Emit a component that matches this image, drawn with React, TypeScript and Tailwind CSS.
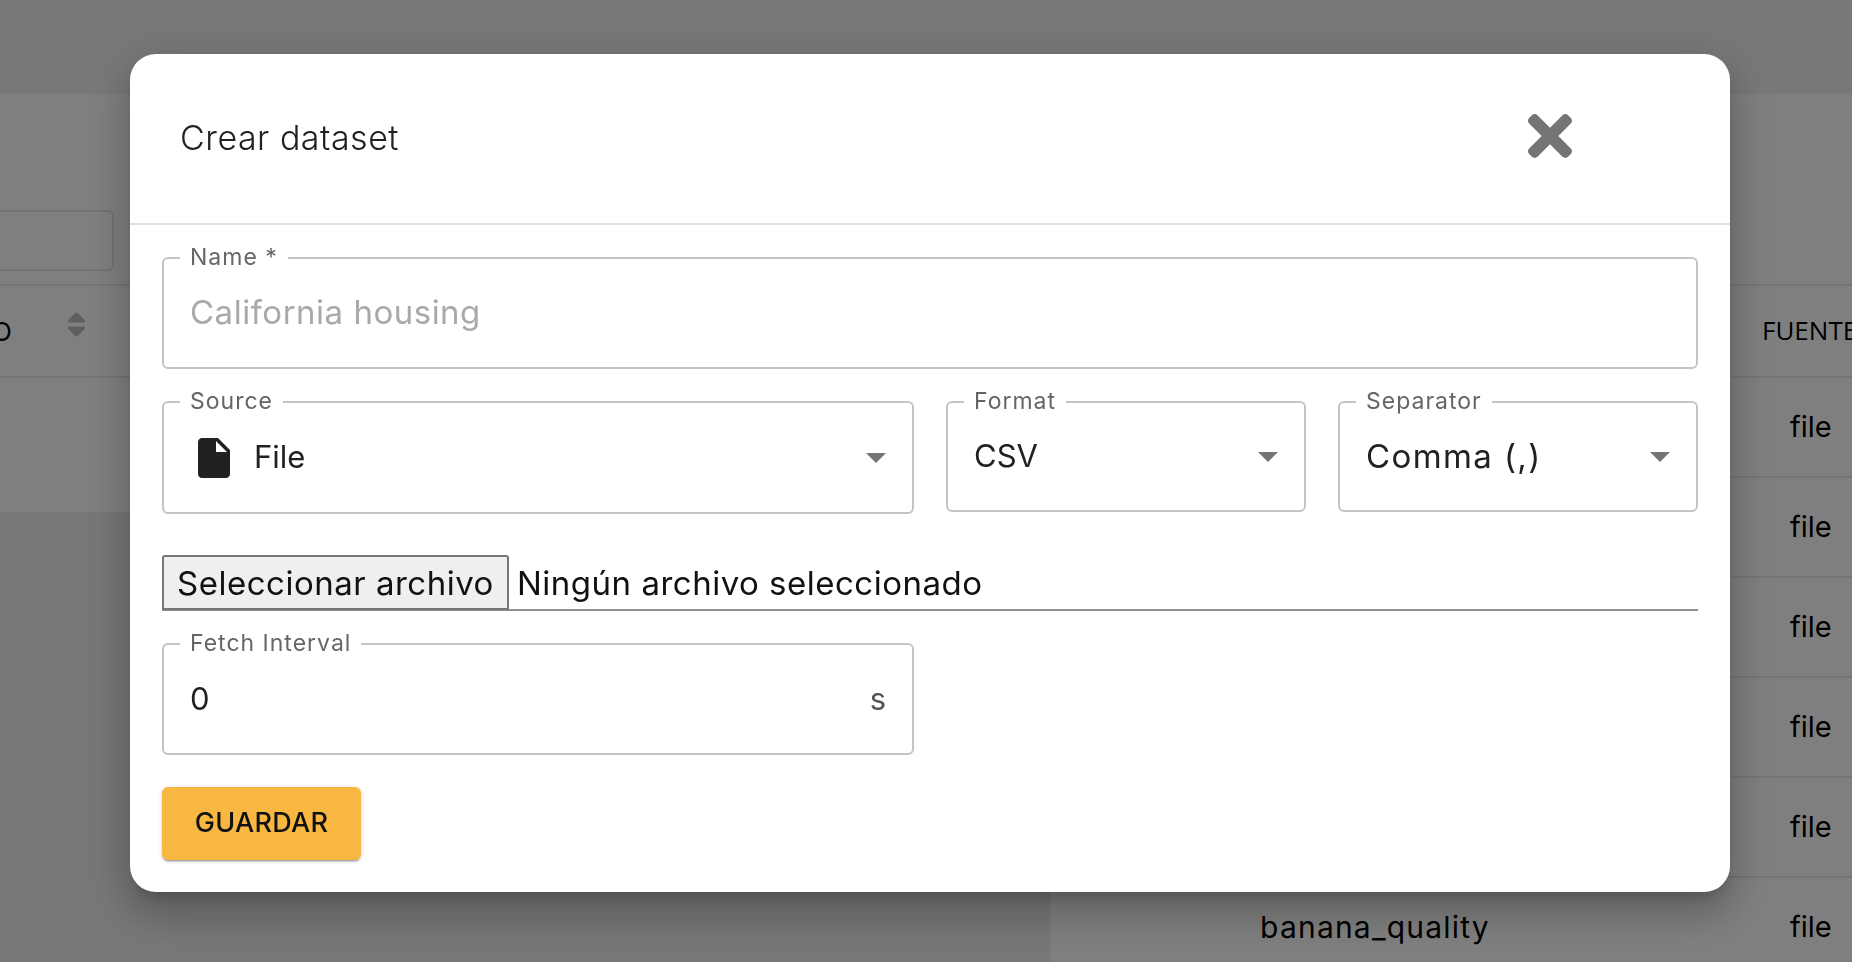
import { FaSort, FaTimes } from 'react-icons/fa';

const rows = ['', '', '', '', '', 'banana_quality'];

function Caret() {
  return (
    <svg width="20" height="10" viewBox="0 0 20 10" className="shrink-0">
      <polygon points="0,0 20,0 10,10" fill="#757575" />
    </svg>
  );
}

function Field({ label, className, children }: { label: string; className: string; children: React.ReactNode }) {
  return (
    <div className={`relative flex items-center rounded-[6px] border-2 border-[#c4c4c4] pl-[26px] ${className}`}>
      <span className="absolute left-4 -top-[14px] bg-white px-2.5 text-[23px] leading-[24px] tracking-[1px] text-[#666666]">{label}</span>
      {children}
    </div>
  );
}

function Background() {
  return (
    <div className="relative h-screen overflow-hidden bg-[#ffffff] font-['Inter',sans-serif]">
      <div className="h-[94px] bg-[#f0f0f0]" />
      <div className="h-[190px] pt-[116px]">
        <div className="h-[61px] w-[114px] rounded-r-[6px] border-2 border-l-0 border-[#e6e6e6]" />
      </div>
      <div className="flex h-[94px] items-center border-y-2 border-[#ebebeb] text-[26px] text-black">
        <span className="-ml-[8px] w-[69px] shrink-0">O</span>
        <FaSort size={31} color="#bdbdbd" className="-mt-[14px] shrink-0" />
        <span className="ml-[1670px] -mt-[2px] shrink-0 font-['Open_Sans',sans-serif]">FUENTE</span>
      </div>
      {rows.map((name, i) => (
        <div key={i} className="ml-[1050px] flex h-[100px] items-center border-b-2 border-[#ebebeb] text-[29px] text-black">
          <span className="w-[650px] text-center text-[30px] tracking-[1.2px]">{name}</span>
          <span className="ml-[90px]">file</span>
        </div>
      ))}
      <div className="absolute bottom-0 left-0 top-[512px] w-[1050px] bg-[#eeeeee]" />
    </div>
  );
}

export default function App() {
  return (
    <div className="relative">
      <Background />
      {/* modal */}
      <div className="fixed inset-0 bg-black/50 pl-[130px] pt-[54px] font-['Inter',sans-serif]">
        <div className="w-[1600px] rounded-[26px] bg-white shadow-[0_11px_15px_-7px_rgba(0,0,0,0.2),0_24px_38px_3px_rgba(0,0,0,0.14),0_9px_46px_8px_rgba(0,0,0,0.12)]">
          <div className="flex h-[171px] items-center justify-between border-b-2 border-[#e0e0e6] pl-[50px] pr-[148px]">
            <h2 className="-mt-[3px] text-[34px] font-light tracking-[0.5px] text-[#212121]">Crear dataset</h2>
            <FaTimes size={64} color="#757575" className="-mt-[5px]" />
          </div>

          <div className="px-8 pb-8 pt-[32px]">
            <Field label="Name *" className="h-[112px]">
              <span className="text-[33px] tracking-[0.5px] text-[#a9a9a9]">California housing</span>
            </Field>

            <div className="mt-8 flex items-start gap-8">
              <Field label="Source" className="h-[113px] w-[752px]">
                <svg width="48" height="48" viewBox="0 0 24 24" className="shrink-0" fill="#212121">
                  <path d="M6 2c-1.1 0-1.99.9-1.99 2L4 20c0 1.1.89 2 1.99 2H18c1.1 0 2-.9 2-2V8l-6-6H6zm7 7V3.5L18.5 9H13z" />
                </svg>
                <span className="ml-4 flex-1 text-[31px] text-[#212121]">File</span>
                <span className="mr-[26px] flex"><Caret /></span>
              </Field>
              <Field label="Format" className="h-[111px] w-[360px]">
                <span className="flex-1 text-[31px] text-[#212121]">CSV</span>
                <span className="mr-[26px] flex"><Caret /></span>
              </Field>
              <Field label="Separator" className="h-[111px] w-[360px]">
                <span className="flex-1 text-[33px] tracking-[1.4px] text-[#212121]">Comma (,)</span>
                <span className="mr-[26px] flex"><Caret /></span>
              </Field>
            </div>

            {/* file picker */}
            <div className="mt-[42px] flex h-[55px] items-center border-b-2 border-[#8f8f8f] text-[33px] tracking-[0.5px] text-[#111111]">
              <button className="h-[55px] w-[347px] shrink-0 rounded-t-[3px] border-2 border-[#767676] bg-[#efefef] pt-[2px] text-center">Seleccionar archivo</button>
              <span className="ml-2 pt-[2px]">Ningún archivo seleccionado</span>
            </div>

            <Field label="Fetch Interval" className="mt-[32px] h-[112px] w-[752px]">
              <span className="flex-1 text-[31px] text-[#212121]">0</span>
              <span className="mr-[26px] text-[31px] text-[#555555]">s</span>
            </Field>

            <button className="mt-[32px] block h-[73px] w-[199px] rounded-[6px] bg-[#f7b740] text-[27px] font-medium tracking-[0.3px] text-[#111111] shadow-[0_3px_1px_-2px_rgba(0,0,0,0.2),0_2px_2px_0_rgba(0,0,0,0.14),0_1px_5px_0_rgba(0,0,0,0.12)]">GUARDAR</button>
          </div>
        </div>
      </div>
    </div>
  );
}
